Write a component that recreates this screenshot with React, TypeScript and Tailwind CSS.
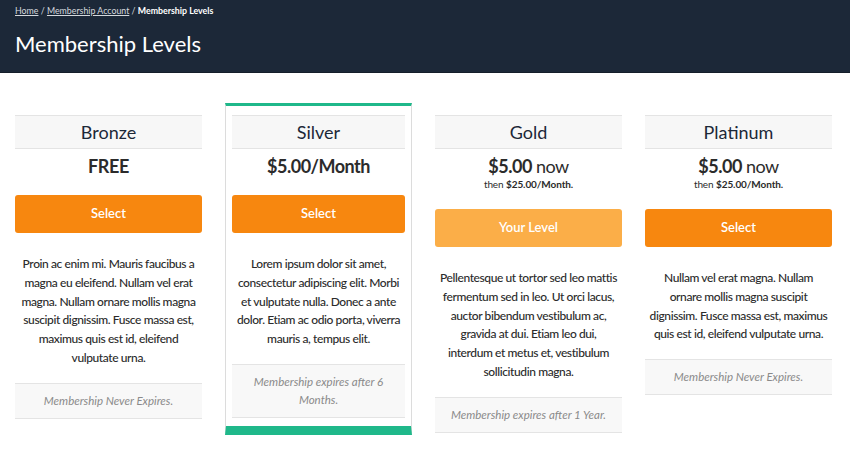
import React from "react"

type Level = {
  name: string
  price: React.ReactNode
  button: string
  current?: boolean
  featured?: boolean
  text: string
  expires: string
}

const levels: Level[] = [
  {
    name: "Bronze",
    price: <div className="text-[18px] font-bold leading-[22px] tracking-[-0.4px]">FREE</div>,
    button: "Select",
    text: "Proin ac enim mi. Mauris faucibus a magna eu eleifend. Nullam vel erat magna. Nullam ornare mollis magna suscipit dignissim. Fusce massa est, maximus quis est id, eleifend vulputate urna.",
    expires: "Membership Never Expires.",
  },
  {
    name: "Silver",
    price: <div className="text-[18px] font-bold leading-[22px] tracking-[-0.5px]">$5.00/Month</div>,
    button: "Select",
    featured: true,
    text: "Lorem ipsum dolor sit amet, consectetur adipiscing elit. Morbi et vulputate nulla. Donec a ante dolor. Etiam ac odio porta, viverra mauris a, tempus elit.",
    expires: "Membership expires after 6 Months.",
  },
  {
    name: "Gold",
    price: <TwoPart />,
    button: "Your Level",
    current: true,
    text: "Pellentesque ut tortor sed leo mattis fermentum sed in leo. Ut orci lacus, auctor bibendum vestibulum ac, gravida at dui. Etiam leo dui, interdum et metus et, vestibulum sollicitudin magna.",
    expires: "Membership expires after 1 Year.",
  },
  {
    name: "Platinum",
    price: <TwoPart />,
    button: "Select",
    text: "Nullam vel erat magna. Nullam ornare mollis magna suscipit dignissim. Fusce massa est, maximus quis est id, eleifend vulputate urna.",
    expires: "Membership Never Expires.",
  },
]

function TwoPart() {
  return (
    <div>
      <div className="text-[18px] leading-[22px] tracking-[-0.5px]">
        <span className="font-bold">$5.00</span> now
      </div>
      <div className="text-[10px] leading-[14px] tracking-[-0.1px]">
        then <span className="font-bold">$25.00/Month.</span>
      </div>
    </div>
  )
}

function LevelBody({ level }: { level: Level }) {
  return (
    <div className="flex flex-col">
      <div className="flex h-[34px] items-center justify-center border-y border-[#e4e4e4] bg-[#f7f7f7] text-[18px] text-[#1c2838]">
        {level.name}
      </div>
      <div className="pt-[6px] text-center text-[#2b2b2b]">{level.price}</div>
      <button
        className={
          level.current
            ? "mt-[18px] h-[38px] rounded-[3px] bg-[#fbae48] text-[13px] font-semibold text-white"
            : "mt-[18px] h-[38px] rounded-[3px] bg-[#f7870f] text-[13px] font-semibold text-white"
        }
      >
        {level.button}
      </button>
      <p className="mt-[22px] px-[3px] text-center text-[12px] font-medium leading-[18.8px] tracking-[-0.4px] text-[#2b2b2b]">
        {level.text}
      </p>
      <div className="mt-[15px] border-y border-[#e4e4e4] bg-[#f8f8f8] px-[8px] py-[8px] text-center text-[11.5px] italic leading-[18px] text-[#8a8a8a]">
        {level.expires}
      </div>
    </div>
  )
}

export default function App() {
  return (
    <div className="min-h-[458px] bg-white font-['Lato',sans-serif]">
      <div className="h-[73px] border-b border-[#151e2a] bg-[#1c2838] px-[15px] pt-[4px]">
        <div className="text-[8.8px] leading-[14px] text-[#d5d9de]">
          <a className="underline">Home</a> / <a className="underline">Membership Account</a> /{" "}
          <span className="font-bold text-white">Membership Levels</span>
        </div>
        <h1 className="mt-[13px] text-[22px] leading-[26px] text-white">Membership Levels</h1>
      </div>
      <div className="grid grid-cols-[repeat(4,187px)] items-start gap-[23px] px-[15px] pt-[42px]">
        {levels.map((level) =>
          level.featured ? (
            <div key={level.name} className="-mt-[12px] border-x border-[#dcdcdc] border-t-[3px] border-t-[#1fb88a] border-b-[9px] border-b-[#1fb88a] px-[6px] pb-[8px] pt-[9px]">
              <LevelBody level={level} />
            </div>
          ) : (
            <LevelBody key={level.name} level={level} />
          )
        )}
      </div>
    </div>
  )
}
